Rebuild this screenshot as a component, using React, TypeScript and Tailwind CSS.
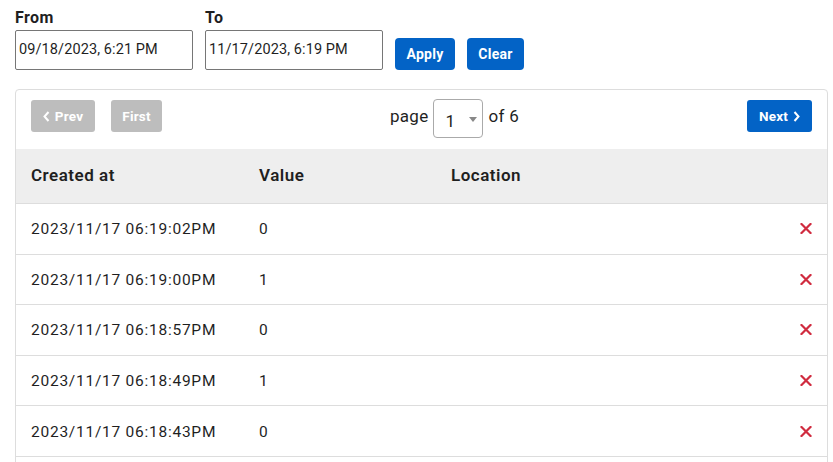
import React from "react";

const rows = [
  ["2023/11/17 06:19:02PM", "0"],
  ["2023/11/17 06:19:00PM", "1"],
  ["2023/11/17 06:18:57PM", "0"],
  ["2023/11/17 06:18:49PM", "1"],
  ["2023/11/17 06:18:43PM", "0"],
];

function Chevron({ dir }: { dir: "left" | "right" }) {
  return (
    <svg width="7" height="11" viewBox="0 0 7 11" className="inline-block">
      {dir === "left" ? (
        <path d="M5.5 1 L1.5 5.5 L5.5 10" fill="none" stroke="currentColor" strokeWidth="2" />
      ) : (
        <path d="M1.5 1 L5.5 5.5 L1.5 10" fill="none" stroke="currentColor" strokeWidth="2" />
      )}
    </svg>
  );
}

function XIcon() {
  return (
    <svg width="12" height="11" viewBox="0 0 12 11">
      <path d="M1.5 1 L10.5 10 M10.5 1 L1.5 10" stroke="#d02b3f" strokeWidth="2.2" strokeLinecap="square" />
    </svg>
  );
}

export default function App() {
  return (
    <div
      className="w-[833px] h-[462px] overflow-hidden bg-white text-[#1f1f1f]"
      style={{ fontFamily: "Roboto, 'Liberation Sans', sans-serif" }}
    >
      <div className="pt-[8px] pl-[15px] pr-[5px]">
        <div className="flex items-end gap-3">
          <div className="flex flex-col">
            <label className="text-[16px] font-bold leading-[20px] mb-[2px] tracking-[0.4px]">From</label>
            <div className="w-[178px] h-[40px] border border-[#767676] rounded-[2px] flex items-center pl-[3px] text-[14.5px] tracking-[0.1px]">
              09/18/2023, 6:21 PM
            </div>
          </div>
          <div className="flex flex-col">
            <label className="text-[16px] font-bold leading-[20px] mb-[2px] tracking-[0.4px]">To</label>
            <div className="w-[178px] h-[40px] border border-[#767676] rounded-[2px] flex items-center pl-[3px] text-[14.5px] tracking-[0.1px]">
              11/17/2023, 6:19 PM
            </div>
          </div>
          <button className="h-[32px] w-[60px] rounded-[4px] bg-[#0363c6] text-white text-[14px] font-bold tracking-[0.3px]">
            Apply
          </button>
          <button className="h-[32px] w-[57px] rounded-[4px] bg-[#0363c6] text-white text-[14px] font-bold tracking-[0.3px]">
            Clear
          </button>
        </div>

        <div className="mt-[19px] border border-[#dddddd] rounded-[4px] overflow-hidden">
          <div className="h-[59px] px-[15px] flex justify-between items-start">
            <div className="flex gap-4 pt-[10px]">
              <button className="h-[32px] w-[64px] rounded-[3px] bg-[#bdbdbd] text-white text-[13.5px] font-bold flex items-center justify-center gap-[5px] tracking-[0.2px]">
                <Chevron dir="left" />
                Prev
              </button>
              <button className="h-[32px] w-[51px] rounded-[3px] bg-[#bdbdbd] text-white text-[13.5px] font-bold tracking-[0.2px]">
                First
              </button>
            </div>
            <div className="flex items-start gap-[5px] pt-[9px] text-[17px] tracking-[0.3px]">
              <span className="leading-[17px] mt-[9px]">page</span>
              <div className="relative w-[50px] h-[39px] border border-[#aaaaaa] rounded-[4px] bg-white">
                <span className="absolute left-[11px] top-[11px] text-[17px] leading-[20px]">1</span>
                <svg width="8" height="5" viewBox="0 0 8 5" className="absolute left-[35px] top-[17px]">
                  <path d="M0 0 L8 0 L4 5 Z" fill="#888" />
                </svg>
              </div>
              <span className="leading-[17px] mt-[9px]">of 6</span>
            </div>
            <div className="pt-[10px]">
              <button className="h-[32px] w-[65px] rounded-[3px] bg-[#0363c6] text-white text-[13.5px] font-bold flex items-center justify-center gap-[5px] tracking-[0.2px]">
                Next
                <Chevron dir="right" />
              </button>
            </div>
          </div>

          <div className="h-[55px] bg-[#eeeeee] border-b border-[#dddddd] flex items-center px-[15px] text-[17px] font-semibold tracking-[0.5px]">
            <div className="w-[228px]">Created at</div>
            <div className="w-[192px]">Value</div>
            <div className="flex-1">Location</div>
          </div>

          {rows.map(([d, v], i) => (
            <div
              key={i}
              className="h-[50.6px] border-b border-[#dddddd] flex items-center px-[15px] text-[15.5px] tracking-[0.75px]"
            >
              <div className="w-[228px] pt-[2px]">{d}</div>
              <div className="w-[192px] pt-[2px]">{v}</div>
              <div className="flex-1" />
              <XIcon />
            </div>
          ))}
          <div className="h-[50.6px] border-b border-[#dddddd]" />
        </div>
      </div>
    </div>
  );
}
